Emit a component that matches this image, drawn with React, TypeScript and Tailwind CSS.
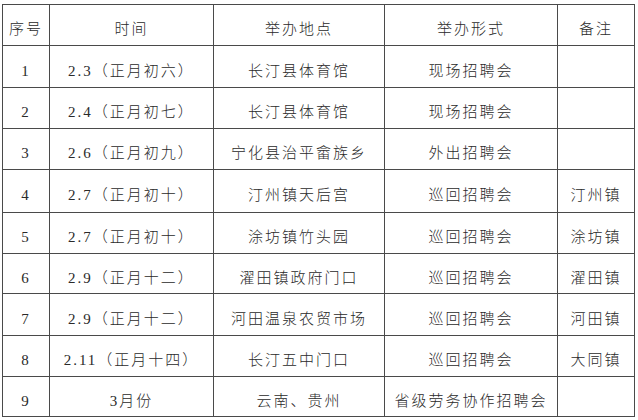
const header = ["序号", "时间", "举办地点", "举办形式", "备注"];

const rows: string[][] = [
  ["1", "2.3（正月初六）", "长汀县体育馆", "现场招聘会", ""],
  ["2", "2.4（正月初七）", "长汀县体育馆", "现场招聘会", ""],
  ["3", "2.6（正月初九）", "宁化县治平畲族乡", "外出招聘会", ""],
  ["4", "2.7（正月初十）", "汀州镇天后宫", "巡回招聘会", "汀州镇"],
  ["5", "2.7（正月初十）", "涂坊镇竹头园", "巡回招聘会", "涂坊镇"],
  ["6", "2.9（正月十二）", "濯田镇政府门口", "巡回招聘会", "濯田镇"],
  ["7", "2.9（正月十二）", "河田温泉农贸市场", "巡回招聘会", "河田镇"],
  ["8", "2.11（正月十四）", "长汀五中门口", "巡回招聘会", "大同镇"],
  ["9", "3月份", "云南、贵州", "省级劳务协作招聘会", ""],
];

function Cell({ text }: { text: string }) {
  return (
    <div className="flex items-center justify-center border-r border-b border-[#4a4a4a] pt-[9px] text-[15px] tracking-[2px] text-[#2a2a2a] whitespace-nowrap">
      {text}
    </div>
  );
}

export default function App() {
  return (
    <div className="w-[638px] h-[420px] bg-white pt-1 pl-[2px] font-['Liberation_Serif','Noto_Sans_CJK_SC',serif] font-light">
      <div className="grid grid-cols-[47px_164px_171px_173px_77px] grid-rows-[41px_42px_41px_41px_43px_41px_40px_42px_41px_40px] w-[633px] border-l border-t border-[#4a4a4a]">
        {header.map((h, i) => (
          <Cell key={"h" + i} text={h} />
        ))}
        {rows.map((r, ri) => r.map((c, ci) => <Cell key={ri + "-" + ci} text={c} />))}
      </div>
    </div>
  );
}
